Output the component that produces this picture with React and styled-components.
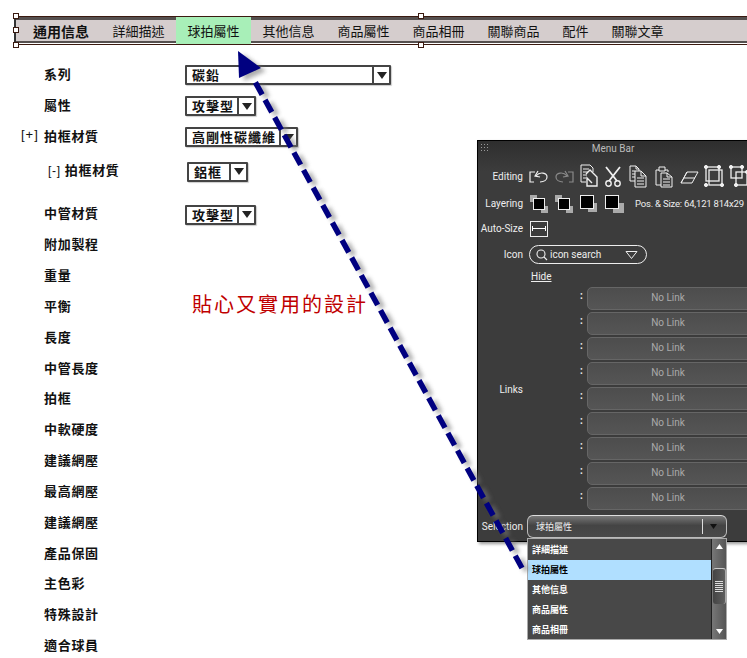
import React from "react";
import styled, { createGlobalStyle } from "styled-components";

const CJK = `"Noto Sans CJK TC", "Liberation Sans", sans-serif`;
const tabs = ["通用信息", "詳細描述", "球拍屬性", "其他信息", "商品屬性", "商品相冊", "關聯商品", "配件", "關聯文章"];
const upperRows = ["附加製程", "重量"];
const lowerRows = ["長度", "中管長度", "拍框", "中軟硬度", "建議網壓", "最高網壓", "建議網壓", "產品保固", "主色彩", "特殊設計", "適合球員"];
const listItems = ["詳細描述", "球拍屬性", "其他信息", "商品屬性", "商品相冊"];

const Caret = () => (
  <svg width="10" height="7" viewBox="0 0 10 7">
    <path d="M0 0H10L5 7Z" fill="#222" />
  </svg>
);

const Select = ({ value, width, nested }) => (
  <SelectBox $width={width} $nested={nested}>
    <SelectValue>{value}</SelectValue>
    <SelectArrow>
      <Caret />
    </SelectArrow>
  </SelectBox>
);

const Arrow = () => (
  <ArrowSvg width="747" height="658" viewBox="0 0 747 658">
    <defs>
      <filter id="soft" x="-20%" y="-20%" width="140%" height="140%">
        <feGaussianBlur stdDeviation="2" />
      </filter>
    </defs>
    <g filter="url(#soft)" opacity="0.6" transform="translate(5 3)">
      <path d="M522 568L253 78" stroke="#777" strokeWidth="5.5" strokeDasharray="14 6" fill="none" />
      <path d="M238 51L261 68L239 78Z" fill="#777" />
    </g>
    <path d="M522 568L253 78" stroke="#000080" strokeWidth="5.5" strokeDasharray="14 6" fill="none" />
    <path d="M238 51L261 68L239 78Z" fill="#000080" />
  </ArrowSvg>
);

const Ico = ({ children, dim }) => (
  <svg width="20" height="24" viewBox="0 0 20 24" fill="none" stroke={dim ? "#8a8a8a" : "#f0f0f0"} strokeWidth="1">
    {children}
  </svg>
);

const EditIcons = () => (
  <>
    <Ico>
      <path d="M6 8H1V18H5M9 7L6 12L11 13M7 12C11 7 18 9 18 13C18 16 15 18 11 18" strokeWidth="1.2" />
    </Ico>
    <Ico dim>
      <path d="M14 8H19V18H15M11 7L14 12L9 13M13 12C9 7 2 9 2 13C2 16 5 18 9 18" strokeWidth="1.2" />
    </Ico>
    <Ico>
      <path d="M2 1H11L14 4V8M2 1V18H7M4 5H10M4 8H9M4 11H8M4 14H7" />
      <path d="M7 10L11 6L18 13V22H8V14L13 19" strokeWidth="1.4" />
    </Ico>
    <Ico>
      <path d="M2 3L13 17M16 3L5 17" strokeWidth="1.8" />
      <circle cx="4.5" cy="19.5" r="2.7" strokeWidth="1.4" />
      <circle cx="13.5" cy="19.5" r="2.7" strokeWidth="1.4" />
    </Ico>
    <Ico>
      <path d="M1 2H7L10 5V7M1 2V17H6M7 2V5H10M3 7H6M3 10H6M3 13H6" />
      <path d="M6 7H12L17 12V23H6ZM12 7V12H17M8 14H15M8 17H15M8 20H15" />
    </Ico>
    <Ico>
      <path d="M5 6H2V21H7M11 6H14V8M5 3H11V7H5Z" />
      <path d="M7 9H13L18 13V23H7ZM13 9V13H18M9 15H16M9 18H16M9 21H16" />
    </Ico>
    <Ico>
      <path d="M8 8H19L13 19H2ZM8 8L2 19M5 14H16" />
    </Ico>
    <Ico>
      <rect x="2" y="3" width="13" height="14" strokeWidth="1.3" />
      <rect x="5" y="6" width="13" height="15" strokeWidth="1.3" />
      <g fill="#f0f0f0">
        <circle cx="2" cy="3" r="1.6" />
        <circle cx="15" cy="3" r="1.6" />
        <circle cx="2" cy="21" r="1.6" />
        <circle cx="18" cy="21" r="1.6" />
      </g>
    </Ico>
    <Ico>
      <rect x="2" y="3" width="11" height="11" strokeWidth="1.3" />
      <rect x="7" y="8" width="11" height="13" strokeWidth="1.3" />
      <g fill="#f0f0f0">
        <circle cx="2" cy="3" r="1.6" />
        <circle cx="13" cy="3" r="1.6" />
        <circle cx="7" cy="21" r="1.6" />
        <circle cx="18" cy="8" r="1.6" />
      </g>
    </Ico>
  </>
);

const LayerIcon = ({ top }) => (
  <svg width="19" height="18" viewBox="0 0 19 18">
    {top ? (
      <>
        <rect x="8" y="8" width={top === 1 ? 9 : 11} height={top === 1 ? 9 : 10} fill="#aaa" />
        <rect x="0.5" y="0.5" width="13" height="13" fill="#000" stroke="#eee" />
      </>
    ) : (
      <>
        <rect x="0" y="0" width="7" height="7" fill="#aaa" />
        <rect x="11" y="11" width="7" height="7" fill="#aaa" />
        <rect x="3.5" y="3.5" width="11" height="11" fill="#000" stroke="#eee" />
      </>
    )}
  </svg>
);

export default function App() {
  return (
    <Page>
      <GlobalStyle />
      <MenuWrap>
        <MenuBar>
          {tabs.map((t, i) => (
            <Tab key={t} $first={i === 0} $active={i === 2}>
              {t}
            </Tab>
          ))}
        </MenuBar>
        <Handle $left="13px" $top="-3px" />
        <Handle $left="13px" $top="11px" />
        <Handle $left="13px" $top="26px" />
        <Handle $left="418px" $top="-3px" />
        <Handle $left="418px" $top="26px" />
      </MenuWrap>

      <Form>
        <Row>
          <Label>系列</Label>
          <Select value="碳鉛" width="206px" />
        </Row>
        <Row>
          <Label>屬性</Label>
          <Select value="攻擊型" width="71px" />
        </Row>
        <Row>
          <Toggle>[+]</Toggle>
          <Label>拍框材質</Label>
          <Select value="高剛性碳纖維" width="113px" />
        </Row>
        <Row $top="4px" $bottom="12px">
          <Label>
            <NestedIndent>
              <NestedToggle>[-]</NestedToggle>拍框材質
            </NestedIndent>
          </Label>
          <Select value="鋁框" width="61px" nested />
        </Row>
        <Row>
          <Label>中管材質</Label>
          <Select value="攻擊型" width="71px" />
        </Row>
        {upperRows.map((r) => (
          <Row key={r}>
            <Label>{r}</Label>
          </Row>
        ))}
        <Row>
          <Label>平衡</Label>
          <Note>貼心又實用的設計</Note>
        </Row>
        {lowerRows.map((r, i) => (
          <Row key={i}>
            <Label>{r}</Label>
          </Row>
        ))}
      </Form>

      <Panel>
        <PanelTitle>
          <Grip />
          Menu Bar
        </PanelTitle>
        <PanelRow $height="30px">
          <PanelLabel>Editing</PanelLabel>
          <IconRow>
            <EditIcons />
          </IconRow>
        </PanelRow>
        <PanelRow $height="25px">
          <PanelLabel>Layering</PanelLabel>
          <LayerRow>
            <LayerIcon />
            <LayerIcon />
            <LayerIcon top={1} />
            <LayerIcon top={2} />
            <PosText>Pos. &amp; Size: 64,121 814x29</PosText>
          </LayerRow>
        </PanelRow>
        <PanelRow $height="25px">
          <PanelLabel>Auto-Size</PanelLabel>
          <AutoSize>
            <svg width="14" height="5" viewBox="0 0 14 5">
              <path d="M.5 0V5M13.5 0V5M0 2.5H14" stroke="#fff" fill="none" />
            </svg>
          </AutoSize>
        </PanelRow>
        <PanelRow $height="27px">
          <PanelLabel>Icon</PanelLabel>
          <IconSearch>
            <svg width="12" height="12" viewBox="0 0 12 12" fill="none" stroke="#eee" strokeWidth="1.1">
              <circle cx="5" cy="5" r="4" />
              <path d="M8 8L11 11" />
            </svg>
            <SearchText>icon search</SearchText>
            <svg width="13" height="8" viewBox="0 0 13 8">
              <path d="M1 .5H12L6.5 7.5Z" fill="none" stroke="#eee" />
            </svg>
          </IconSearch>
        </PanelRow>
        <PanelRow $height="17px">
          <PanelLabel />
          <HideLink>Hide</HideLink>
        </PanelRow>
        <LinksGrid>
          <LinksLabel>Links</LinksLabel>
          <LinkList>
            {Array.from({ length: 9 }).map((_, i) => (
              <LinkRow key={i}>
                <Colon>:</Colon>
                <LinkButton>No Link</LinkButton>
              </LinkRow>
            ))}
          </LinkList>
        </LinksGrid>
        <SelectionRow>
          <PanelLabel>Selection</PanelLabel>
          <PanelSelect>
            <span>球拍屬性</span>
            <PanelSelectEnd>
              <svg width="7" height="5" viewBox="0 0 7 5">
                <path d="M0 0H7L3.5 5Z" fill="#111" />
              </svg>
            </PanelSelectEnd>
          </PanelSelect>
        </SelectionRow>
      </Panel>

      <Dropdown>
        <DropList>
          {listItems.map((t, i) => (
            <DropItem key={t} $active={i === 1}>
              {t}
            </DropItem>
          ))}
        </DropList>
        <Scrollbar>
          <svg width="7" height="5" viewBox="0 0 7 5">
            <path d="M0 5H7L3.5 0Z" fill="#fff" />
          </svg>
          <ScrollThumb>
            <svg width="8" height="11" viewBox="0 0 8 11">
              <path d="M0 .5H8M0 2.5H8M0 4.5H8M0 6.5H8M0 8.5H8M0 10.5H8" stroke="#ddd" />
            </svg>
          </ScrollThumb>
          <svg width="7" height="5" viewBox="0 0 7 5">
            <path d="M0 0H7L3.5 5Z" fill="#fff" />
          </svg>
        </Scrollbar>
      </Dropdown>

      <Arrow />
    </Page>
  );
}

const GlobalStyle = createGlobalStyle`
  html, body { margin: 0; padding: 0; background: #fff; }
  body { font-family: ${CJK}; color: #111; }
`;

const Page = styled.div`
  position: relative;
  width: 747px;
  height: 658px;
  overflow: hidden;
  background: #fff;
`;

const MenuWrap = styled.div`
  position: relative;
  margin-top: 16px;
  height: 29px;
`;

const MenuBar = styled.div`
  display: flex;
  align-items: stretch;
  height: 29px;
  margin-left: 14px;
  padding-left: 9px;
  box-sizing: border-box;
  border-top: 1px solid #3b1a10;
  border-bottom: 1px solid #3b1a10;
  border-left: 2px solid #333;
  background: linear-gradient(
    #55504f 0, #55504f 3px, #d5cdcd 3px, #d5cdcd 24px, #55504f 24px, #55504f 26px, #fff 26px
  );
`;

const Tab = styled.div`
  display: flex;
  align-items: center;
  justify-content: center;
  padding: ${(p) => (p.$first ? "0 12px 0 8px" : "0 11.5px")};
  font-size: ${(p) => (p.$first ? "14px" : "13px")};
  font-weight: ${(p) => (p.$first ? 700 : 400)};
  background: ${(p) => (p.$active ? "#a8efb8" : "transparent")};
  white-space: nowrap;
`;

const Handle = styled.i`
  position: absolute;
  left: ${(p) => p.$left};
  top: ${(p) => p.$top};
  width: 4px;
  height: 4px;
  background: #fff;
  border: 1px solid #3b1a10;
`;

const Form = styled.div`
  display: flex;
  flex-direction: column;
  padding-top: 13.5px;
`;

const Row = styled.div`
  display: flex;
  align-items: center;
  height: 30.85px;
  flex: none;
  position: relative;
  margin-top: ${(p) => p.$top || "0"};
  margin-bottom: ${(p) => p.$bottom || "0"};
`;

const Label = styled.div`
  width: 185px;
  flex: none;
  box-sizing: border-box;
  padding-left: 44px;
  font-size: 13px;
  font-weight: 700;
  letter-spacing: 0.7px;
  line-height: 20px;
  white-space: nowrap;
`;

const Toggle = styled.span`
  position: absolute;
  left: 21px;
  top: 7px;
  font-size: 13px;
  letter-spacing: 1px;
  font-family: "Liberation Sans", sans-serif;
`;

const NestedIndent = styled.span`
  margin-left: 4px;
`;

const NestedToggle = styled.span`
  margin-right: 4px;
  font-size: 12px;
  font-weight: 400;
  font-family: "Liberation Sans", sans-serif;
`;

const SelectBox = styled.div`
  display: flex;
  width: ${(p) => p.$width};
  height: 20px;
  margin-top: 3px;
  box-sizing: border-box;
  border: 2px solid #444;
  border-radius: 1px;
  box-shadow: 1px 1px 1px #ccc;
  background: #fff;
  margin-left: ${(p) => (p.$nested ? "2px" : "0")};
`;

const SelectValue = styled.div`
  flex: 1;
  padding-left: 5px;
  font-size: 13px;
  font-weight: 700;
  line-height: 16px;
  letter-spacing: 1px;
  white-space: nowrap;
`;

const SelectArrow = styled.div`
  width: 15px;
  flex: none;
  display: flex;
  align-items: center;
  justify-content: center;
  border-left: 2px solid #444;
`;

const Note = styled.div`
  margin-left: 7px;
  margin-bottom: 4px;
  font-size: 20px;
  line-height: 1;
  letter-spacing: 2px;
  color: #c00000;
  white-space: nowrap;
`;

const Panel = styled.div`
  position: absolute;
  left: 477px;
  top: 140px;
  width: 300px;
  height: 402px;
  box-sizing: border-box;
  border: 1px solid #000;
  background: linear-gradient(#2e2e2e, #3c3c3c 30px, #3c3c3c);
  box-shadow: 2px 2px 3px #999;
  color: #eee;
  font-family: Roboto, "Liberation Sans", sans-serif;
  font-size: 10px;
`;

const PanelTitle = styled.div`
  position: relative;
  height: 20px;
  line-height: 16px;
  width: 270px;
  text-align: center;
  color: #bbb;
`;

const Grip = styled.i`
  position: absolute;
  left: 2px;
  top: 2px;
  width: 9px;
  height: 8px;
  background-image: radial-gradient(#999 1px, transparent 1px);
  background-size: 3px 3px;
`;

const PanelRow = styled.div`
  display: flex;
  align-items: center;
  height: ${(p) => p.$height};
`;

const PanelLabel = styled.div`
  width: 45px;
  flex: none;
  text-align: right;
  white-space: nowrap;
  margin-right: 6px;
`;

const IconRow = styled.div`
  display: flex;
  gap: 5px;
`;

const LayerRow = styled.div`
  display: flex;
  align-items: center;
  gap: 6px;
  margin-left: 1px;
`;

const PosText = styled.span`
  margin-left: 5px;
  font-size: 9.5px;
  letter-spacing: -0.2px;
  white-space: nowrap;
`;

const AutoSize = styled.div`
  width: 18px;
  height: 16px;
  display: flex;
  align-items: center;
  justify-content: center;
  border: 1px solid #eee;
  box-sizing: border-box;
  margin-left: 1px;
`;

const IconSearch = styled.div`
  display: flex;
  align-items: center;
  width: 118px;
  height: 19px;
  box-sizing: border-box;
  padding: 0 8px 0 6px;
  border: 1px solid #eee;
  border-radius: 10px;
`;

const SearchText = styled.span`
  flex: 1;
  margin-left: 2px;
`;

const HideLink = styled.span`
  margin-left: 2px;
  text-decoration: underline;
`;

const LinksGrid = styled.div`
  display: flex;
  align-items: center;
  margin-top: 2px;
`;

const LinksLabel = styled.div`
  width: 45px;
  text-align: right;
  flex: none;
  padding-bottom: 18px;
`;

const LinkList = styled.div`
  display: flex;
  flex-direction: column;
  gap: 2px;
  margin-left: 62px;
`;

const LinkRow = styled.div`
  display: flex;
  align-items: center;
  position: relative;
`;

const Colon = styled.span`
  position: absolute;
  left: -5px;
  top: 3px;
  font-weight: 700;
`;

const LinkButton = styled.div`
  width: 170px;
  margin-left: 2px;
  height: 23px;
  box-sizing: border-box;
  border: 1px solid #666;
  border-radius: 5px;
  background: linear-gradient(#4d4d4d, #555);
  text-align: center;
  line-height: 20px;
  color: #aaa;
  padding-right: 8px;
`;

const SelectionRow = styled.div`
  display: flex;
  align-items: center;
  margin-top: 5px;
`;

const PanelSelect = styled.div`
  display: flex;
  align-items: center;
  justify-content: space-between;
  width: 200px;
  height: 23px;
  box-sizing: border-box;
  padding: 0 3px 0 8px;
  margin-left: -2px;
  border: 1px solid #bbb;
  border-top-color: #ddd;
  border-radius: 6px;
  background: linear-gradient(#777, #444 45%, #4a4a4a);
  font-family: ${CJK};
  font-size: 9px;
`;

const PanelSelectEnd = styled.div`
  display: flex;
  align-items: center;
  justify-content: center;
  width: 20px;
  height: 15px;
  border-left: 1px solid #ddd;
`;

const Dropdown = styled.div`
  position: absolute;
  left: 527px;
  top: 538px;
  width: 200px;
  height: 102px;
  box-sizing: border-box;
  display: flex;
  border: 1px solid #aaa;
  background: #484848;
`;

const DropList = styled.div`
  flex: 1;
  padding-top: 1px;
  font-size: 9px;
  color: #fff;
  font-weight: 700;
`;

const DropItem = styled.div`
  height: 20px;
  line-height: 20px;
  padding-left: 4px;
  background: ${(p) => (p.$active ? "#b0dfff" : "transparent")};
  color: ${(p) => (p.$active ? "#000" : "#fff")};
`;

const Scrollbar = styled.div`
  width: 15px;
  display: flex;
  flex-direction: column;
  align-items: center;
  justify-content: space-between;
  padding: 5px 0;
  box-sizing: border-box;
  border-left: 1px solid #222;
  background: linear-gradient(90deg, #777, #555);
  position: relative;
`;

const ScrollThumb = styled.div`
  position: absolute;
  left: 1px;
  top: 29px;
  width: 12px;
  height: 35px;
  display: flex;
  align-items: center;
  justify-content: center;
  border-radius: 3px;
  border-top: 1px solid #ccc;
  border-right: 1px solid #aaa;
  background: linear-gradient(90deg, #444, #5e5e5e);
`;

const ArrowSvg = styled.svg`
  position: absolute;
  left: 0;
  top: 0;
  pointer-events: none;
`;
